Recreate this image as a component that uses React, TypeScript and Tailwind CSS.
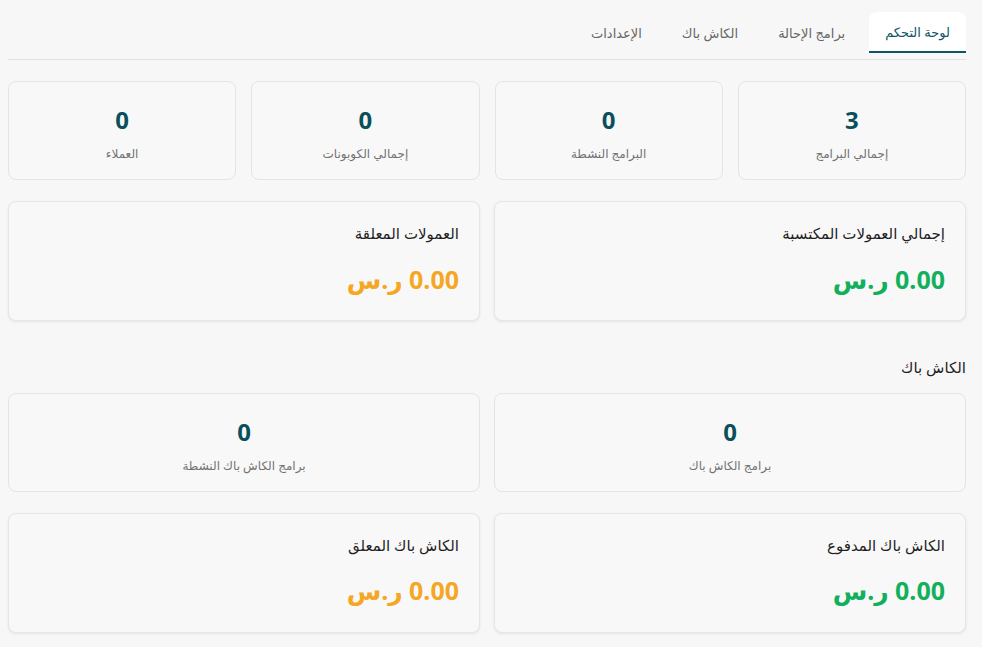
import React from "react";

const tabs = ["لوحة التحكم", "برامج الإحالة", "الكاش باك", "الإعدادات"];

function StatCard({ value, label }: { value: string; label: string }) {
  return (
    <div className="flex h-[99px] flex-col items-center rounded-lg border border-[#e4e4e4] bg-[#f8f8f8] pt-[26px]">
      <div className="text-[24px] font-bold leading-none text-[#0b4f5c]">{value}</div>
      <div className="mt-[14px] text-[12px] leading-[16px] text-[#727272]">{label}</div>
    </div>
  );
}

function AmountCard({ title, amount, tone }: { title: string; amount: string; tone: "green" | "orange" }) {
  return (
    <div className="h-[120px] rounded-lg border border-[#e6e6e6] bg-[#f8f8f8] px-5 pt-[20px] shadow-[0_1px_3px_rgba(0,0,0,0.08)]">
      <div className="text-[15px] text-[#1f1f1f]">{title}</div>
      <div
        className={`mt-[22px] text-[25px] font-bold leading-none ${
          tone === "green" ? "text-[#12b05c]" : "text-[#f5a623]"
        }`}
      >
        {amount}
      </div>
    </div>
  );
}

export default function App() {
  return (
    <div
      dir="rtl"
      className="min-h-screen bg-[#f7f7f7] pl-2 pr-4"
      style={{ fontFamily: '"Noto Sans", "DejaVu Sans", sans-serif' }}
    >
      {/* Tabs */}
      <div className="flex gap-2 border-b border-[#e2e2e2] pt-3 pb-[6px]">
        {tabs.map((tab, i) => (
          <div
            key={tab}
            className={`flex h-[41px] items-center px-4 pt-[2px] text-[13px] ${
              i === 0
                ? "rounded-t-lg border-b-2 border-[#0d5665] bg-white text-[#0d5665]"
                : "text-[#666]"
            }`}
          >
            {tab}
          </div>
        ))}
      </div>

      {/* Referral stats */}
      <div className="mt-[21px] grid grid-cols-4 gap-[15px]">
        <StatCard value="3" label="إجمالي البرامج" />
        <StatCard value="0" label="البرامج النشطة" />
        <StatCard value="0" label="إجمالي الكوبونات" />
        <StatCard value="0" label="العملاء" />
      </div>

      <div className="mt-[21px] grid grid-cols-2 gap-[14px]">
        <AmountCard title="إجمالي العمولات المكتسبة" amount="0.00 ر.س" tone="green" />
        <AmountCard title="العمولات المعلقة" amount="0.00 ر.س" tone="orange" />
      </div>

      {/* Cashback */}
      <h2 className="mt-[35px] text-[15px] text-[#1f1f1f]">الكاش باك</h2>

      <div className="mt-[14px] grid grid-cols-2 gap-[14px]">
        <StatCard value="0" label="برامج الكاش باك" />
        <StatCard value="0" label="برامج الكاش باك النشطة" />
      </div>

      <div className="mt-[21px] grid grid-cols-2 gap-[14px] pb-4">
        <AmountCard title="الكاش باك المدفوع" amount="0.00 ر.س" tone="green" />
        <AmountCard title="الكاش باك المعلق" amount="0.00 ر.س" tone="orange" />
      </div>
    </div>
  );
}
